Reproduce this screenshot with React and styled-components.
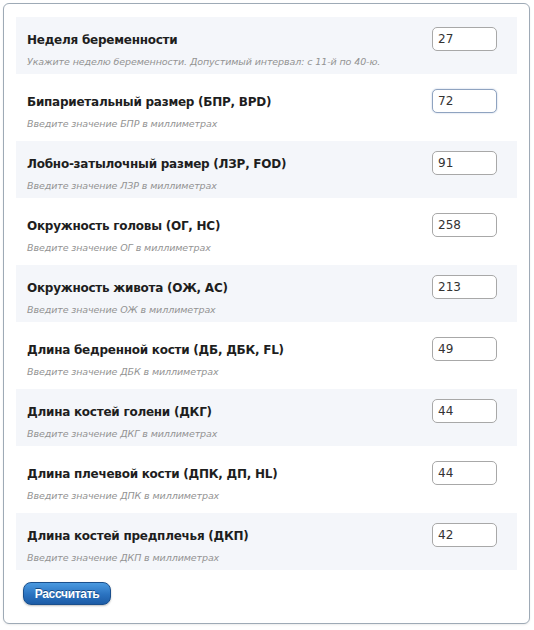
import React, { useState } from 'react';
import styled, { createGlobalStyle } from 'styled-components';

const GlobalStyle = createGlobalStyle`
  body {
    margin: 0;
    background: #ffffff;
    font-family: "DejaVu Sans", Verdana, sans-serif;
  }
`;

const Page = styled.div`
  padding: 3px 4px 5px 3px;
`;

const Panel = styled.div`
  border: 1px solid #9eaab6;
  border-radius: 6px;
  padding: 13px 12px 18px 12px;
  background: #ffffff;
  box-shadow: 0 1px 2px rgba(0, 0, 0, 0.08);
`;

const List = styled.div`
  display: flex;
  flex-direction: column;
  gap: 5px;
`;

const Row = styled.div`
  display: flex;
  justify-content: space-between;
  align-items: flex-start;
  height: 57px;
  box-sizing: border-box;
  padding: 10px 20px 0 11px;
  background: ${({ shaded }) => (shaded ? '#f4f6fa' : 'transparent')};
`;

const Texts = styled.div`
  display: flex;
  flex-direction: column;
`;

const Title = styled.div`
  font-family: "DejaVu Sans", Verdana, sans-serif;
  font-weight: bold;
  font-size: 12px;
  letter-spacing: -0.25px;
  color: #1e1e1e;
  line-height: 16px;
  margin-top: 5px;
`;

const Hint = styled.div`
  font-family: "DejaVu Sans", Verdana, sans-serif;
  font-style: italic;
  font-size: 9.5px;
  letter-spacing: -0.1px;
  color: #939393;
  margin-top: 8px;
`;

const Field = styled.input`
  width: 65px;
  height: 24px;
  box-sizing: border-box;
  border: 1px solid ${({ focused }) => (focused ? '#8fa3c0' : '#a8a8a8')};
  box-shadow: ${({ focused }) => (focused ? '0 0 2px #b7c6dc' : 'none')};
  border-radius: 5px;
  padding: 0 5px;
  font-family: "DejaVu Sans", Verdana, sans-serif;
  font-size: 12px;
  color: #333;
  background: #fff;
  outline: none;
`;

const Button = styled.button`
  margin: 12px 0 0 7px;
  width: 88px;
  height: 23px;
  border: 1px solid #1a4f8c;
  border-radius: 8px;
  background: linear-gradient(#4b9ae0, #2a72c0 55%, #1c5ca6);
  color: #fff;
  font-family: "Liberation Sans Narrow", "Liberation Sans", Arial, sans-serif;
  font-weight: bold;
  font-size: 12px;
  letter-spacing: -0.3px;
  text-shadow: 0 -1px 0 #174a84;
  box-shadow: 0 1px 2px rgba(0, 0, 0, 0.25);
  cursor: pointer;
`;

const fields = [
  { title: 'Неделя беременности', hint: 'Укажите неделю беременности. Допустимый интервал: с 11-й по 40-ю.', value: '27' },
  { title: 'Бипариетальный размер (БПР, BPD)', hint: 'Введите значение БПР в миллиметрах', value: '72', focused: true },
  { title: 'Лобно-затылочный размер (ЛЗР, FOD)', hint: 'Введите значение ЛЗР в миллиметрах', value: '91' },
  { title: 'Окружность головы (ОГ, HC)', hint: 'Введите значение ОГ в миллиметрах', value: '258' },
  { title: 'Окружность живота (ОЖ, AC)', hint: 'Введите значение ОЖ в миллиметрах', value: '213' },
  { title: 'Длина бедренной кости (ДБ, ДБК, FL)', hint: 'Введите значение ДБК в миллиметрах', value: '49' },
  { title: 'Длина костей голени (ДКГ)', hint: 'Введите значение ДКГ в миллиметрах', value: '44' },
  { title: 'Длина плечевой кости (ДПК, ДП, HL)', hint: 'Введите значение ДПК в миллиметрах', value: '44' },
  { title: 'Длина костей предплечья (ДКП)', hint: 'Введите значение ДКП в миллиметрах', value: '42' },
];

export default function App() {
  const [values, setValues] = useState(fields.map((f) => f.value));

  return (
    <>
      <GlobalStyle />
      <Page>
        <Panel>
          <List>
            {fields.map((f, i) => (
              <Row key={f.title} shaded={i % 2 === 0}>
                <Texts>
                  <Title>{f.title}</Title>
                  <Hint>{f.hint}</Hint>
                </Texts>
                <Field
                  focused={f.focused}
                  value={values[i]}
                  onChange={(e) => {
                    const next = [...values];
                    next[i] = e.target.value;
                    setValues(next);
                  }}
                />
              </Row>
            ))}
          </List>
          <Button>Рассчитать</Button>
        </Panel>
      </Page>
    </>
  );
}
